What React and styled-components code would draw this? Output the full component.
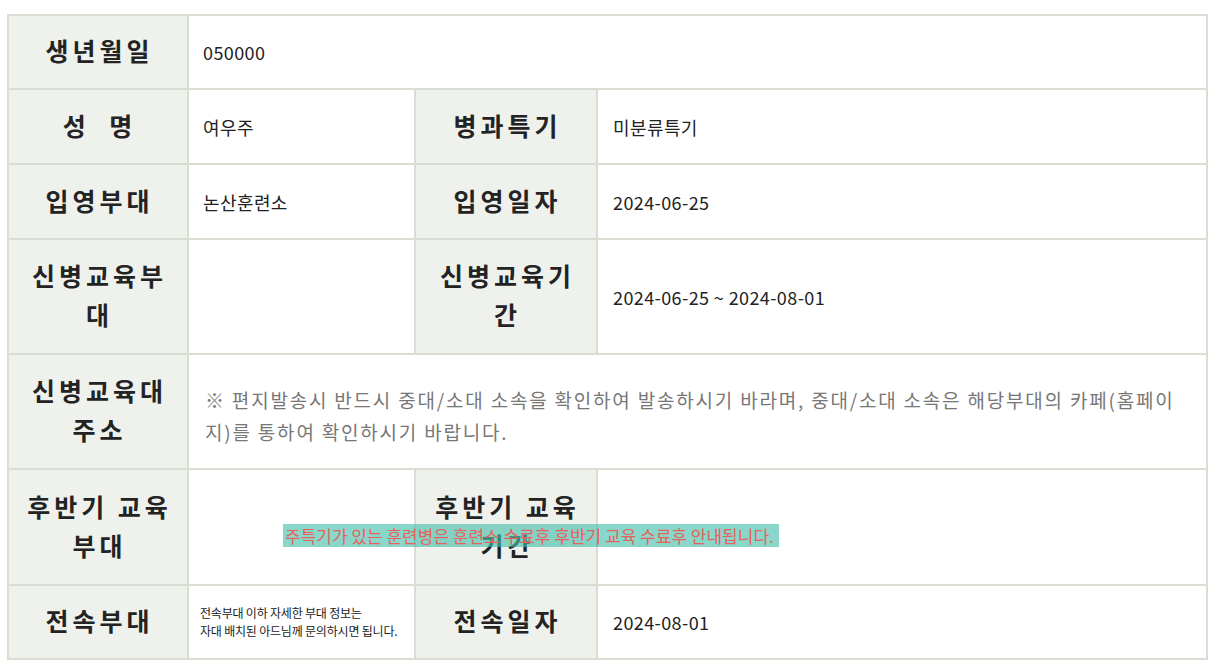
import React from "react";
import styled, { createGlobalStyle } from "styled-components";

const Global = createGlobalStyle`
  html, body { margin: 0; padding: 0; background: #ffffff; }
  body { font-family: "Noto Sans CJK KR", "Noto Sans", sans-serif; color: #222; }
`;

const Page = styled.div`
  padding: 14px 6px 0 7px;
`;

const Board = styled.div`
  position: relative;
  display: grid;
  grid-template-columns: 178px 225px 180px 1fr;
  grid-template-rows: 72px 73px 73px 113px 113px 114px 72px;
  gap: 2px;
  padding: 2px;
  background: #d8ded2;
  width: 1197px;
`;

const Label = styled.div`
  background: #eef1ec;
  display: flex;
  align-items: center;
  justify-content: center;
  text-align: center;
  padding: 0 12px 3px 15px;
  font-size: 25px;
  font-weight: 700;
  letter-spacing: 4px;
  line-height: 39px;
  color: #232323;
  white-space: pre-wrap;
`;

const Value = styled.div`
  background: #ffffff;
  display: flex;
  align-items: center;
  padding: ${(p) => p.$top || 0}px 14px 0 ${(p) => (p.$left ?? 14)}px;
  font-size: ${(p) => p.$size || 18}px;
  letter-spacing: ${(p) => p.$ls || 0.4}px;
  color: ${(p) => p.$color || "#222"};
  line-height: ${(p) => p.$lh || 26}px;
  grid-column: ${(p) => p.$span || "auto"};
`;

const Small = styled.div`
  font-size: 12px;
  line-height: 18px;
  letter-spacing: -0.2px;
  white-space: nowrap;
  color: #222;
`;

const Banner = styled.div`
  position: absolute;
  left: 276px;
  top: 510px;
  width: 496px;
  height: 23px;
  background: rgba(64, 190, 170, 0.62);
  color: #e8615a;
  font-size: 17px;
  line-height: 23px;
  padding-left: 2px;
  box-sizing: border-box;
  white-space: nowrap;
`;

export default function App() {
  return (
    <>
      <Global />
      <Page>
        <Board>
          <Label>생년월일</Label>
          <Value $span="2 / 5">050000</Value>

          <Label>{"성  명"}</Label>
          <Value>여우주</Value>
          <Label>병과특기</Label>
          <Value $left={15}>미분류특기</Value>

          <Label>입영부대</Label>
          <Value>논산훈련소</Value>
          <Label>입영일자</Label>
          <Value $left={15}>2024-06-25</Value>

          <Label>신병교육부대</Label>
          <Value />
          <Label>신병교육기간</Label>
          <Value $left={15}>2024-06-25 ~ 2024-08-01</Value>

          <Label>신병교육대주소</Label>
          <Value $span="2 / 5" $left={16} $top={8} $color="#777" $size={19} $ls={1.8} $lh={32}>
            <span>
              ※ 편지발송시 반드시 중대/소대 소속을 확인하여 발송하시기 바라며, 중대/소대 소속은 해당부대의 카페(홈페이
              <br />
              지)를 통하여 확인하시기 바랍니다.
            </span>
          </Value>

          <Label>후반기 교육 부대</Label>
          <Value />
          <Label>후반기 교육 기간</Label>
          <Value />

          <Label>전속부대</Label>
          <Value $left={11}>
            <Small>
              전속부대 이하 자세한 부대 정보는
              <br />
              자대 배치된 아드님께 문의하시면 됩니다.
            </Small>
          </Value>
          <Label>전속일자</Label>
          <Value $left={15}>2024-08-01</Value>

          <Banner>주특기가 있는 훈련병은 훈련소 수료후 후반기 교육 수료후 안내됩니다.</Banner>
        </Board>
      </Page>
    </>
  );
}
